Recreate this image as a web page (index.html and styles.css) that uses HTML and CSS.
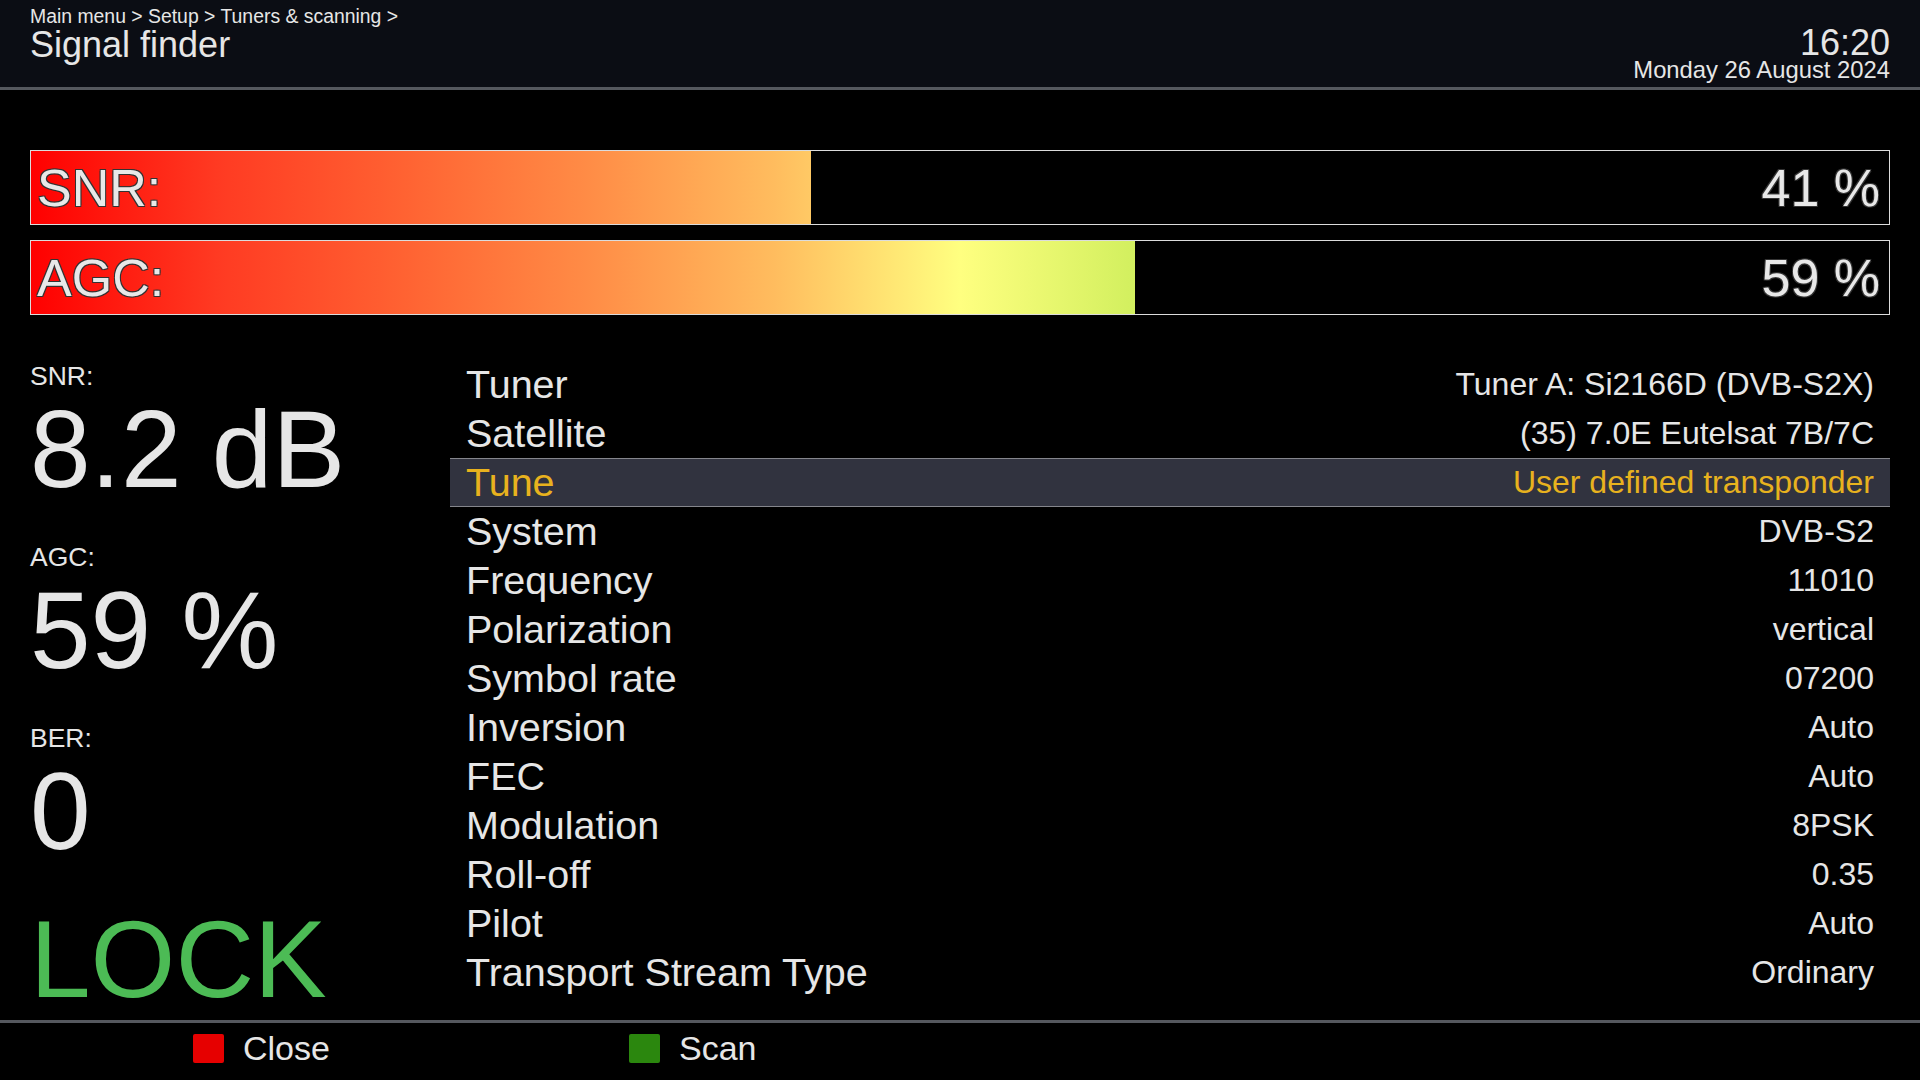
FILE: index.html
```html
<!DOCTYPE html>
<html lang="en">
<head>
  <meta charset="UTF-8" />
  <meta name="viewport" content="width=device-width, initial-scale=1.0" />
  <title>Signal finder</title>
  <link rel="stylesheet" href="styles.css">
</head>
<body>

  <header class="top-bar">
    <div class="title-block">
      <div class="breadcrumb">Main menu &gt; Setup &gt; Tuners &amp; scanning &gt;</div>
      <h1 class="title">Signal finder</h1>
    </div>
    <div class="clock">
      <div class="clock-time">16:20</div>
      <div class="clock-date">Monday 26 August 2024</div>
    </div>
  </header>

  <main class="content">
    <section class="meters">
      <div class="meter" style="--level: 42%">
        <span>SNR:</span>
        <span>41 %</span>
      </div>
      <div class="meter" style="--level: 59.4%">
        <span>AGC:</span>
        <span>59 %</span>
      </div>
    </section>

    <section class="details">
      <div class="readouts">
        <div class="readout">
          <div class="readout-label">SNR:</div>
          <div class="readout-value">8.2 dB</div>
        </div>
        <div class="readout">
          <div class="readout-label">AGC:</div>
          <div class="readout-value">59 %</div>
        </div>
        <div class="readout">
          <div class="readout-label">BER:</div>
          <div class="readout-value">0</div>
        </div>
        <div class="lock-state">LOCK</div>
      </div>

      <ul class="settings">
        <li><span class="name">Tuner</span><span class="val">Tuner A: Si2166D (DVB-S2X)</span></li>
        <li><span class="name">Satellite</span><span class="val">(35) 7.0E Eutelsat 7B/7C</span></li>
        <li class="selected"><span class="name">Tune</span><span class="val">User defined transponder</span></li>
        <li><span class="name">System</span><span class="val">DVB-S2</span></li>
        <li><span class="name">Frequency</span><span class="val">11010</span></li>
        <li><span class="name">Polarization</span><span class="val">vertical</span></li>
        <li><span class="name">Symbol rate</span><span class="val">07200</span></li>
        <li><span class="name">Inversion</span><span class="val">Auto</span></li>
        <li><span class="name">FEC</span><span class="val">Auto</span></li>
        <li><span class="name">Modulation</span><span class="val">8PSK</span></li>
        <li><span class="name">Roll-off</span><span class="val">0.35</span></li>
        <li><span class="name">Pilot</span><span class="val">Auto</span></li>
        <li><span class="name">Transport Stream Type</span><span class="val">Ordinary</span></li>
      </ul>
    </section>
  </main>

  <footer class="key-bar">
    <div class="key"><span class="key-color red"></span>Close</div>
    <div class="key"><span class="key-color green"></span>Scan</div>
  </footer>

</body>
</html>
```

FILE: styles.css
```css
* {
  box-sizing: border-box;
}

html,
body {
  margin: 0;
  height: 100%;
}

body {
  display: flex;
  flex-direction: column;
  font-family: "Liberation Sans", Arial, sans-serif;
  background: #000;
  color: #e6e6e6;
  overflow: hidden;
}

/* header */

.top-bar {
  display: flex;
  justify-content: space-between;
  align-items: flex-start;
  height: 90px;
  padding: 6px 30px 0 30px;
  background: #0b0d14;
  border-bottom: 3px solid #55585e;
}

.breadcrumb {
  font-size: 19.4px;
  line-height: 20px;
}

.title {
  margin: 0;
  font-size: 36px;
  font-weight: normal;
  line-height: 38px;
}

.clock {
  margin-top: 21px;
  text-align: right;
}

.clock-time {
  font-size: 36px;
  line-height: 31px;
}

.clock-date {
  font-size: 23.8px;
  line-height: 24px;
}

/* level bars */

.meters {
  padding: 60px 30px 0 30px;
}

.meter {
  display: flex;
  justify-content: space-between;
  align-items: center;
  height: 75px;
  margin-bottom: 15px;
  padding: 0 9px 0 6px;
  border: 1px solid #dcdcdc;
  font-size: 52px;
  color: #e8e8e8;
  text-shadow: -1px -1px 0 #333, 1px -1px 0 #333, -1px 1px 0 #333, 1px 1px 0 #333;
  background:
    linear-gradient(to right, transparent var(--level), #000 var(--level)),
    linear-gradient(to right, #ff0000 0%, #ff3a22 10%, #ff6232 20%, #ff8c46 30%, #ffbc5e 40%, #ffff80 50%, #d4f060 59%, #30c020 100%);
}

.meter:last-child {
  margin-bottom: 0;
}

/* lower part */

.details {
  display: flex;
  margin-top: 45px;
  padding: 0 30px;
}

.readouts {
  width: 420px;
  flex-shrink: 0;
  padding-top: 2px;
}

.readout {
  margin-bottom: 40px;
}

.readout-label {
  font-size: 26.5px;
  line-height: 28px;
}

.readout-value {
  margin-top: 5px;
  font-size: 109px;
  line-height: 108px;
}

.lock-state {
  margin-top: 6px;
  font-size: 109px;
  line-height: 108px;
  color: #4cbb55;
}

.settings {
  flex: 1;
  margin: 0;
  padding: 0;
  list-style: none;
}

.settings li {
  display: flex;
  justify-content: space-between;
  align-items: center;
  height: 49px;
  padding: 0 16px;
}

.settings .name {
  font-size: 39.5px;
}

.settings .val {
  font-size: 32px;
}

.settings li.selected {
  background: #31333f;
  border-top: 1px solid #85868c;
  border-bottom: 1px solid #85868c;
  color: #e8b21e;
}

/* colour key bar */

.key-bar {
  display: flex;
  align-items: center;
  height: 60px;
  margin-top: auto;
  padding: 0 0 6px 193px;
  border-top: 3px solid #55585e;
  font-size: 34px;
}

.key {
  display: flex;
  align-items: center;
  width: 436px;
}

.key-color {
  width: 31px;
  height: 29px;
  margin-right: 19px;
  border-radius: 2px;
  box-shadow: 0 1px 2px rgba(0, 0, 0, 0.6);
}

.key-color.red {
  background: #e60000;
}

.key-color.green {
  background: #2b870e;
}
```
